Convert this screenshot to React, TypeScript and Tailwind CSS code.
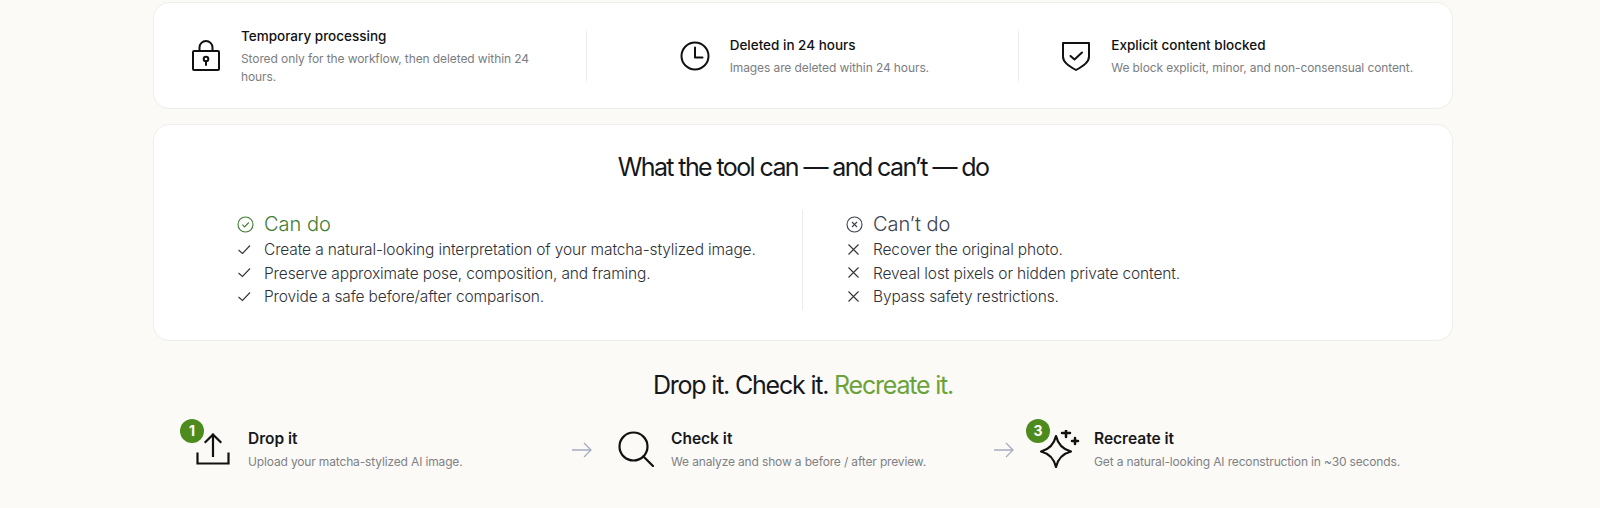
import React from "react";

const font = "font-['Inter','Noto_Sans',sans-serif]";

function Lock() {
  return (
    <svg width="30" height="32" viewBox="0 0 30 32" fill="none" stroke="#111" strokeWidth="2" strokeLinejoin="round" strokeLinecap="round">
      <path d="M8.5 11V7.5a6.500 6.500 0 0 1 13 0V11" />
      <rect x="2" y="11" width="26" height="19" rx="1" />
      <circle cx="15" cy="19" r="2.300" />
      <path d="M15 21.500v3.500" />
    </svg>
  );
}
function Clock() {
  return (
    <svg width="32" height="32" viewBox="0 0 32 32" fill="none" stroke="#111" strokeWidth="2" strokeLinecap="round" strokeLinejoin="round">
      <circle cx="16" cy="16" r="13.500" />
      <path d="M16 7.500V17.500h7.500" />
    </svg>
  );
}
function Shield() {
  return (
    <svg width="30" height="30" viewBox="0 0 30 30" fill="none" stroke="#111" strokeWidth="2" strokeLinecap="round" strokeLinejoin="round">
      <path d="M2 2h26v13.500c0 5.500-5 9-13 13.500-8-4.500-13-8-13-13.500V2Z" />
      <path d="M9.500 15l4 3.500L21 11.500" />
    </svg>
  );
}
function Upload() {
  return (
    <svg width="34" height="34" viewBox="0 0 34 34" fill="none" stroke="#111" strokeWidth="2.200" strokeLinecap="square">
      <path d="M17 24V2.500M9.500 10l7.500-7.500 7.500 7.500" />
      <path d="M1.500 21.500v10h31v-10" />
    </svg>
  );
}
function Search() {
  return (
    <svg width="36" height="36" viewBox="0 0 36 36" fill="none" stroke="#111" strokeWidth="2.200" strokeLinecap="round">
      <circle cx="15.500" cy="15.500" r="14" />
      <path d="M25.500 25.500L35 35" />
    </svg>
  );
}
function Sparkle() {
  return (
    <svg width="40" height="38" viewBox="0 0 40 38" fill="none" stroke="#111" strokeWidth="2.200" strokeLinecap="round" strokeLinejoin="round">
      <path d="M16 6Q19 18.500 31 21.500 19 24.500 16 37 13 24.500 1 21.500 13 18.500 16 6Z" />
      <path strokeWidth="2.500" d="M26 -1v8M22 3h8M35 8v6M32 11h6" />
    </svg>
  );
}
function Arrow() {
  return (
    <svg width="20" height="16" viewBox="0 0 20 16" fill="none" stroke="#a4acc0" strokeWidth="1.300">
      <path d="M0 8h19M12 1l7 7-7 7" />
    </svg>
  );
}
function Check() {
  return (
    <svg width="16" height="16" viewBox="0 0 16 16" fill="none" stroke="#333" strokeWidth="1.100">
      <path d="M1.500 8l4 3.500L13 3.500" />
    </svg>
  );
}
function X() {
  return (
    <svg width="16" height="16" viewBox="0 0 16 16" fill="none" stroke="#333" strokeWidth="1.100">
      <path d="M2.500 2.500l10 10M12.500 2.500l-10 10" />
    </svg>
  );
}

function Info({ icon, title, desc, className }: { icon: React.ReactNode; title: string; desc: string; className: string }) {
  return (
    <div className={className}>
      <div className="flex w-[32px] shrink-0 justify-center">{icon}</div>
      <div>
        <div className="text-[13.500px] leading-[20px] font-medium text-[#111]">{title}</div>
        <div className="mt-[4px] text-[12px] leading-[18px] tracking-[-0.1px] text-[#7b7d80]">{desc}</div>
      </div>
    </div>
  );
}

function Step({ badge, badgeClass, icon, title, desc, className }: { badge?: string; badgeClass?: string; icon: React.ReactNode; title: string; desc: string; className: string }) {
  return (
    <div className={className}>
      <div className="relative -mt-[3px] flex h-[36px] shrink-0 items-center justify-center">
        {icon}
        {badge && (
          <span className={`${badgeClass} absolute top-[-12px] flex h-[24px] w-[24px] items-center justify-center rounded-full bg-[#4e8b1f] text-[14px] font-bold text-white`}>
            {badge}
          </span>
        )}
      </div>
      <div>
        <div className="text-[15.500px] leading-[20px] font-semibold text-[#16181c]">{title}</div>
        <div className="mt-[4px] text-[12px] leading-[18px] tracking-[-0.15px] text-[#7f8186]">{desc}</div>
      </div>
    </div>
  );
}

export default function App() {
  return (
    <div className={`${font} h-[508px] w-full overflow-hidden bg-[#fbfaf6] pt-[2px]`}>
      <div className="ml-[153px] w-[1300px]">
        <section className="grid h-[107px] grid-cols-3 items-center rounded-[16px] border border-[#eeeeea] bg-white">
          <div className="flex h-[50px] items-center border-r border-[#ececea] pl-[36px]">
            <Info
              className="flex items-center gap-[19px] pr-[30px]"
              icon={<Lock />}
              title="Temporary processing"
              desc="Stored only for the workflow, then deleted within 24 hours."
            />
          </div>
          <div className="flex h-[50px] items-center border-r border-[#ececea] pl-[92px]">
            <Info className="flex items-center gap-[19px]" icon={<Clock />} title="Deleted in 24 hours" desc="Images are deleted within 24 hours." />
          </div>
          <div className="flex h-[50px] items-center pl-[41px]">
            <Info className="flex items-center gap-[19px]" icon={<Shield />} title="Explicit content blocked" desc="We block explicit, minor, and non-consensual content." />
          </div>
        </section>

        <section className="mt-[15px] h-[217px] rounded-[16px] border border-[#eeeeea] bg-white pt-[25px]">
          <h2 className="text-center text-[25px] leading-[34px] font-normal tracking-[-1.6px] text-[#15171b]">What the tool can — and can’t — do</h2>
          <div className="mt-[26px] grid grid-cols-2">
            <div className="h-[100px] border-r border-[#ececea] pl-[83px]">
              <div className="flex items-center gap-[10px] text-[20px] leading-[28px] font-light text-[#3f7d33]">
                <svg width="17" height="17" viewBox="0 0 17 17" fill="none" stroke="#3f7d33" strokeWidth="1.100">
                  <circle cx="8.500" cy="8.500" r="7.500" />
                  <path d="M5.300 8.700l2.300 2.200 4.200-4.400" />
                </svg>
                Can do
              </div>
              <ul className="text-[15.500px] leading-[23.500px] font-light tracking-[-0.13px] text-[#2d3138]">
                {["Create a natural-looking interpretation of your matcha-stylized image.", "Preserve approximate pose, composition, and framing.", "Provide a safe before/after comparison."].map((t) => (
                  <li key={t} className="flex items-center gap-[11px]"><Check />{t}</li>
                ))}
              </ul>
            </div>
            <div className="h-[100px] pl-[43px]">
              <div className="flex items-center gap-[10px] text-[20px] leading-[28px] font-light text-[#3c4350]">
                <svg width="17" height="17" viewBox="0 0 17 17" fill="none" stroke="#3c4350" strokeWidth="1.100">
                  <circle cx="8.500" cy="8.500" r="7.500" />
                  <path d="M6 6l5 5M11 6l-5 5" />
                </svg>
                Can’t do
              </div>
              <ul className="text-[15.500px] leading-[23.500px] font-light tracking-[-0.13px] text-[#2d3138]">
                {["Recover the original photo.", "Reveal lost pixels or hidden private content.", "Bypass safety restrictions."].map((t) => (
                  <li key={t} className="flex items-center gap-[11px]"><X />{t}</li>
                ))}
              </ul>
            </div>
          </div>
        </section>

        <h2 className="mt-[27px] text-center text-[25px] leading-[34px] font-normal tracking-[-1.2px] text-[#15171b]">
          Drop it. Check it. <span className="text-[#6ba33a]">Recreate it.</span>
        </h2>

        <div className="mt-[27px] flex items-center pl-[43px]">
          <Step className="flex w-[376px] items-center gap-[18px]" badge="1" badgeClass="left-[-16px]" icon={<Upload />} title="Drop it" desc="Upload your matcha-stylized AI image." />
          <Arrow />
          <div className="w-[26px]" />
          <Step className="flex w-[376px] items-center gap-[17px]" icon={<Search />} title="Check it" desc="We analyze and show a before / after preview." />
          <Arrow />
          <div className="w-[26px]" />
          <Step className="flex items-center gap-[14px]" badge="3" badgeClass="left-[-14px]" icon={<Sparkle />} title="Recreate it" desc="Get a natural-looking AI reconstruction in ~30 seconds." />
        </div>
      </div>
    </div>
  );
}
